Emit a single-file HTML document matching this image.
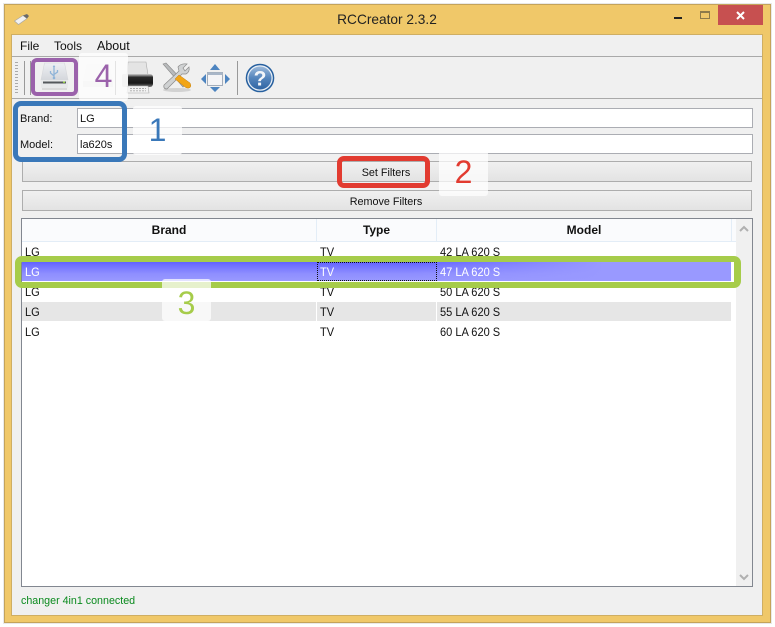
<!DOCTYPE html>
<html>
<head>
<meta charset="utf-8">
<style>
html,body{margin:0;padding:0;background:#fff;}
#p{position:relative;width:775px;height:627px;overflow:hidden;background:#fff;font-family:"Liberation Sans",sans-serif;font-size:11px;color:#111;}
#p div{position:absolute;box-sizing:border-box;}
.t{white-space:nowrap;line-height:14px;}
.r{font-size:12px;transform:scaleX(.92);transform-origin:left center;}
.btn{left:22px;width:730px;height:21px;border:1px solid #adadad;background:linear-gradient(#f0f0f0,#e3e3e3);}
.inp{background:#fff;border:1px solid #abadb3;height:20px;}
.hc{top:219px;height:23px;background:#fafbfd;border-right:1px solid #e3edf7;border-bottom:1px solid #e3edf7;text-align:center;font-weight:bold;font-size:12px;line-height:23px;color:#111;}
.num{background:rgba(255,255,255,.72);border-radius:3px;text-align:center;font-size:32px;line-height:46px;}
</style>
</head>
<body>
<div id="p">
<!-- shadow + window -->
<div style="left:3px;top:3px;width:769px;height:621px;background:#e9e9e9;"></div>
<div style="left:4px;top:4px;width:767px;height:619px;background:#f0c869;border:1px solid #c4a35a;"></div>
<div style="left:11px;top:34px;width:752px;height:582px;background:#f0f0f0;border:1px solid #cfae63;"></div>
<!-- app icon -->
<svg style="position:absolute;left:13px;top:13px" width="18" height="14" viewBox="0 0 18 14"><path d="M1.500 8 L10 2.500 L14 5.500 L5.500 11.500 Z" fill="#f2f2f2" stroke="#a8a8a8" stroke-width=".7"/><path d="M10 2.500 L14 1 L16 3 L14 5.500Z" fill="#6a6a6a"/></svg>
<!-- title -->
<div class="t" style="left:300px;top:12px;width:174px;text-align:center;font-size:13.7px;line-height:16px;color:#222;">RCCreator 2.3.2</div>
<!-- window controls -->
<div style="left:674px;top:17px;width:8px;height:2px;background:#222;"></div>
<div style="left:700px;top:11px;width:10px;height:8px;border:1px solid #8d7a4a;border-top-width:2px;"></div>
<div style="left:718px;top:5px;width:45px;height:20px;background:#c75050;"></div>
<svg style="position:absolute;left:736px;top:11px" width="9" height="9" viewBox="0 0 9 9"><path d="M1 1 L8 8 M8 1 L1 8" stroke="#fff" stroke-width="2"/></svg>
<!-- menu -->
<div class="t" style="left:20px;top:39px;font-size:12px;">File</div>
<div class="t" style="left:54px;top:39px;font-size:12px;">Tools</div>
<div class="t" style="left:97px;top:39px;font-size:12.500px;">About</div>
<div style="left:12px;top:56px;width:750px;height:1px;background:#a9a9a9;"></div>
<div style="left:12px;top:98px;width:750px;height:1px;background:#a9a9a9;"></div>
<!-- toolbar handle -->
<div style="left:15px;top:62px;width:3px;height:33px;background:repeating-linear-gradient(#aaa 0 1px,transparent 1px 3px);"></div>
<div style="left:24px;top:61px;width:1px;height:34px;background:#999;"></div>
<div style="left:30px;top:61px;width:1px;height:34px;background:#999;"></div>
<div style="left:237px;top:61px;width:1px;height:34px;background:#999;"></div>
<!-- drive icon -->
<svg style="position:absolute;left:38px;top:62px" width="36" height="30" viewBox="0 0 36 30">
<defs><linearGradient id="d" x1="0" y1="0" x2="0" y2="1"><stop offset="0" stop-color="#eef0f3"/><stop offset="1" stop-color="#d4d7dc"/></linearGradient></defs>
<path d="M6.500 1 H26.500 L30 18 H3 Z" fill="url(#d)" stroke="#d5d7da" stroke-width=".6"/>
<path d="M3 18 H30 V25 Q30 26 29 26 H4 Q3 26 3 25 Z" fill="#e8e9ea"/>
<rect x="5" y="19.500" width="23" height="2" fill="#55595c"/>
<rect x="25" y="19.500" width="2" height="1.500" fill="#8cc63f"/>
<rect x="4" y="26" width="25" height="2" fill="#c8c8c8" opacity=".55"/>
<path d="M16 4 V16 M16 14 L12.500 11 V9 M16 12.500 L19.500 10 V8" stroke="#8fb4d8" stroke-width="1.300" fill="none"/>
<path d="M14.700 5 L16 3 L17.300 5 Z" fill="#8fb4d8"/><circle cx="16" cy="16" r="1.300" fill="#8fb4d8"/>
</svg>
<!-- ghost drive -->
<svg style="position:absolute;left:80px;top:62px" width="36" height="30" viewBox="0 0 36 30">
<path d="M7 2 H29 L33 19 H3 Z" fill="#ececec"/><rect x="3" y="19" width="30" height="6" fill="#e2e2e2"/>
</svg>
<div style="left:115px;top:61px;width:1px;height:34px;background:#999;"></div>
<!-- printer -->
<svg style="position:absolute;left:120px;top:60px" width="36" height="34" viewBox="0 0 36 34">
<defs><linearGradient id="pr" x1="0" y1="0" x2="0" y2="1"><stop offset="0" stop-color="#cfcfcf"/><stop offset=".25" stop-color="#2a2a2a"/><stop offset=".7" stop-color="#181818"/><stop offset="1" stop-color="#777"/></linearGradient></defs>
<path d="M8 2 H26 L28 15 H7 Z" fill="#e4e4e4" stroke="#aaa" stroke-width=".6"/>
<rect x="2" y="14" width="31" height="13" rx="3" fill="url(#pr)"/>
<rect x="2" y="14" width="6" height="13" rx="2" fill="#d8d8d8"/>
<path d="M8 26 H28 L29 33 H7 Z" fill="#f2f2f2" stroke="#aaa" stroke-width=".6"/>
<path d="M10 28.500 H26 M10 30.800 H26" stroke="#aaa" stroke-width=".9" stroke-dasharray="2 1"/>
</svg>
<!-- tools -->
<svg style="position:absolute;left:160px;top:61px" width="33" height="33" viewBox="0 0 33 33">
<ellipse cx="17" cy="29" rx="14" ry="2" fill="#d2d2d2"/>
<path d="M3 3 L6 2 L26 23 L23 26 Z" fill="#b8babc" stroke="#8a8a8a" stroke-width=".6"/>
<path d="M4 24 L19 10 L18 6 Q21 2 27 3 L23 7 L25 10 L29 6 Q30 11 26 13 L22 13 L7 28 Q3 28 4 24Z" fill="#d0d2d3" stroke="#8b8b8b" stroke-width=".7"/>
<path d="M15 18 L19 14 L30 22 Q32 26 29 27 Q27 27.500 25 26 Z" fill="#f2a516" stroke="#c47f0e" stroke-width=".5"/>
</svg>
<!-- arrows -->
<svg style="position:absolute;left:200px;top:63px" width="31" height="30" viewBox="0 0 31 30">
<rect x="7.500" y="9.500" width="15" height="13" fill="#f4f4f6" stroke="#a3adba"/>
<rect x="7.500" y="9.500" width="15" height="2.500" fill="#a8b6c8"/>
<path d="M15 1 L20 7 H10 Z M15 29 L20 24 H10 Z M1 16 L6 11 V21 Z M30 16 L25 11 V21 Z" fill="#4d84c0"/>
</svg>
<!-- help -->
<svg style="position:absolute;left:245px;top:63px" width="30" height="30" viewBox="0 0 30 30">
<defs><linearGradient id="h" x1="0" y1="0" x2="0" y2="1"><stop offset="0" stop-color="#9bb9da"/><stop offset=".5" stop-color="#5585bc"/><stop offset="1" stop-color="#2f64a3"/></linearGradient></defs>
<circle cx="15" cy="15" r="14.300" fill="#27609f"/><circle cx="15" cy="15" r="12.800" fill="#e9eff6"/><circle cx="15" cy="15" r="11.500" fill="url(#h)"/>
<text x="15" y="22.500" text-anchor="middle" font-family="Liberation Sans" font-weight="bold" font-size="21" fill="#f4f6f9">?</text>
</svg>
<!-- form -->
<div class="t" style="left:20px;top:112px;">Brand:</div>
<div class="t" style="left:20px;top:138px;">Model:</div>
<div class="inp" style="left:77px;top:108px;width:676px;"></div>
<div class="inp" style="left:77px;top:134px;width:676px;"></div>
<div class="t" style="left:80px;top:112px;">LG</div>
<div class="t" style="left:80px;top:138px;">la620s</div>
<!-- buttons -->
<div class="btn" style="top:161px;"></div>
<div class="btn" style="top:190px;"></div>
<div class="t" style="left:22px;width:728px;top:166px;text-align:center;font-size:10.800px;">Set Filters</div>
<div class="t" style="left:22px;width:728px;top:195px;text-align:center;font-size:10.800px;">Remove Filters</div>
<!-- table -->
<div style="left:21px;top:218px;width:732px;height:369px;background:#fff;border:1px solid #828790;"></div>
<div class="hc" style="left:22px;width:295px;">Brand</div>
<div class="hc" style="left:317px;width:120px;">Type</div>
<div class="hc" style="left:437px;width:295px;">Model</div>
<div style="left:732px;top:219px;width:4px;height:23px;background:#fafbfd;border-bottom:1px solid #e3edf7;"></div>
<div style="left:736px;top:219px;width:16px;height:367px;background:#f0f0f0;"></div>
<svg style="position:absolute;left:739px;top:225px" width="10" height="8" viewBox="0 0 10 8"><path d="M1 6 L5 2 L9 6" fill="none" stroke="#b0b0b0" stroke-width="2"/></svg>
<svg style="position:absolute;left:739px;top:573px" width="10" height="8" viewBox="0 0 10 8"><path d="M1 2 L5 6 L9 2" fill="none" stroke="#b0b0b0" stroke-width="2"/></svg>
<!-- rows -->
<div style="left:22px;top:262px;width:709px;height:19px;background:linear-gradient(90deg,rgba(153,153,255,0) 55%,#9999ff 82%),linear-gradient(#6262ff,#8e8eff 60%,#9999ff);"></div>
<div style="left:22px;top:302px;width:294px;height:19px;background:#e6e6e6;"></div>
<div style="left:317px;top:302px;width:119px;height:19px;background:#e6e6e6;"></div>
<div style="left:437px;top:302px;width:294px;height:19px;background:#e6e6e6;"></div>
<div style="left:317px;top:262px;width:120px;height:19px;border:1px dotted #111;"></div>

<div class="t r" style="left:25px;top:245px;">LG</div>
<div class="t r" style="left:320px;top:245px;">TV</div>
<div class="t r" style="left:440px;top:245px;">42 LA 620 S</div>

<div class="t r" style="left:25px;top:265px;color:#fff;">LG</div>
<div class="t r" style="left:320px;top:265px;color:#fff;">TV</div>
<div class="t r" style="left:440px;top:265px;color:#fff;">47 LA 620 S</div>

<div class="t r" style="left:25px;top:285px;">LG</div>
<div class="t r" style="left:320px;top:285px;">TV</div>
<div class="t r" style="left:440px;top:285px;">50 LA 620 S</div>

<div class="t r" style="left:25px;top:305px;">LG</div>
<div class="t r" style="left:320px;top:305px;">TV</div>
<div class="t r" style="left:440px;top:305px;">55 LA 620 S</div>

<div class="t r" style="left:25px;top:325px;">LG</div>
<div class="t r" style="left:320px;top:325px;">TV</div>
<div class="t r" style="left:440px;top:325px;">60 LA 620 S</div>
<!-- status -->
<div class="t" style="left:21px;top:594px;color:#0a8a1e;font-size:10.700px;">changer 4in1 connected</div>
<!-- annotations -->
<div style="left:15px;top:256px;width:726px;height:32px;border:6px solid #a6cc4a;border-right-width:7px;border-radius:7px;"></div>
<div style="left:31px;top:58px;width:47px;height:38px;border:4px solid #9b62ab;border-radius:6px;"></div>
<div style="left:13px;top:101px;width:114px;height:61px;border:5px solid #3a78b9;border-radius:8px;"></div>
<div style="left:337px;top:156px;width:93px;height:32px;border:5px solid #e23b30;border-radius:7px;"></div>
<div class="num" style="left:79px;top:53px;width:49px;height:48px;color:#9b62ab;">4</div>
<div class="num" style="left:133px;top:106px;width:49px;height:49px;color:#3a78b9;line-height:48px;">1</div>
<div class="num" style="left:439px;top:150px;width:49px;height:46px;color:#e23b30;line-height:44px;">2</div>
<div class="num" style="left:162px;top:279px;width:49px;height:42px;color:#a6cc4a;line-height:48px;">3</div>
</div>
</body>
</html>
